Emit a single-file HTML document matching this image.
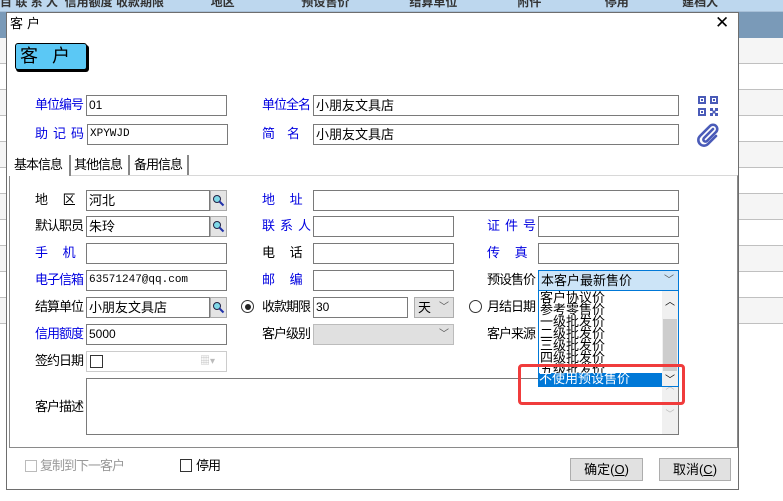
<!DOCTYPE html>
<html><head><meta charset="utf-8"><style>
*{box-sizing:border-box;margin:0;padding:0}
body{width:783px;height:501px;position:relative;background:#fff;font-family:"Liberation Sans","Noto Sans CJK SC",sans-serif;font-size:13px;color:#000;overflow:hidden}
.a{position:absolute}
.hd{background:#bdd7ee;top:0;height:12px;left:0;width:783px;border-bottom:1px solid #a8c0d8}
.lb{position:absolute;font-size:13px;line-height:20px;white-space:nowrap;letter-spacing:-1px}
.bl{color:#0000e0}
.in{position:absolute;border:1px solid #7a7a7a;background:#fff;height:21px;font-size:12px;line-height:19px;padding-left:2px;white-space:nowrap}
.sb{position:absolute;width:17px;height:21px;background:#e4e4e4;border:1px solid #aaa}
.cmb{position:absolute;border:1px solid #adadad;background:#e1e1e1;height:21px;line-height:19px;padding-left:3px}
.chev{position:absolute;right:4px;top:0;font-size:10px;color:#555}
.btn{position:absolute;background:#e1e1e1;border:1px solid #adadad;height:23px;line-height:21px;text-align:center;font-size:13px}
</style></head><body>
<div class="a hd"></div>
<div class="a" style="left:0;top:12px;width:783px;height:26px;background:#7a9ab8"></div>
<div class="a" style="left:0;top:38px;width:783px;height:286px;background:repeating-linear-gradient(#f5f5f5 0 25px,#c0c0c0 25px 26px,#fff 26px 51px,#c0c0c0 51px 52px)"></div>
<div class="a" style="left:0;top:-3px;font-size:12px;color:#333;font-weight:bold;white-space:nowrap;line-height:10px">目 联 系 人&nbsp;&nbsp;信用额度 收款期限&nbsp;&nbsp;&nbsp;&nbsp;&nbsp;&nbsp;&nbsp;&nbsp;&nbsp;&nbsp;&nbsp;&nbsp;&nbsp;&nbsp;地区&nbsp;&nbsp;&nbsp;&nbsp;&nbsp;&nbsp;&nbsp;&nbsp;&nbsp;&nbsp;&nbsp;&nbsp;&nbsp;&nbsp;&nbsp;&nbsp;&nbsp;&nbsp;&nbsp;&nbsp;预设售价&nbsp;&nbsp;&nbsp;&nbsp;&nbsp;&nbsp;&nbsp;&nbsp;&nbsp;&nbsp;&nbsp;&nbsp;&nbsp;&nbsp;&nbsp;&nbsp;&nbsp;&nbsp;结算单位&nbsp;&nbsp;&nbsp;&nbsp;&nbsp;&nbsp;&nbsp;&nbsp;&nbsp;&nbsp;&nbsp;&nbsp;&nbsp;&nbsp;&nbsp;&nbsp;&nbsp;&nbsp;附件&nbsp;&nbsp;&nbsp;&nbsp;&nbsp;&nbsp;&nbsp;&nbsp;&nbsp;&nbsp;&nbsp;&nbsp;&nbsp;&nbsp;&nbsp;&nbsp;&nbsp;&nbsp;&nbsp;停用&nbsp;&nbsp;&nbsp;&nbsp;&nbsp;&nbsp;&nbsp;&nbsp;&nbsp;&nbsp;&nbsp;&nbsp;&nbsp;&nbsp;&nbsp;&nbsp;建档人</div>
<!-- dialog -->
<div class="a" style="left:6px;top:12px;width:733px;height:478px;background:#fff;border:1px solid #6e6e6e"></div>
<div class="lb" style="left:10px;top:14px;letter-spacing:4px">客户</div>
<div class="lb" style="left:715px;top:13px;font-size:17px">✕</div>
<div class="a" style="left:16px;top:45px;width:73px;height:27px;background:#000;border-radius:3px"></div>
<div class="a" style="left:15px;top:43px;width:72px;height:27px;background:#5bc8f5;border:1px solid #000;border-radius:3px;font-size:18px;line-height:25px;padding-left:4px;letter-spacing:14px">客户</div>

<div class="lb bl" style="left:35px;top:95px">单位编号</div>
<div class="in" style="left:86px;top:95px;width:141px">01</div>
<div class="lb bl" style="left:262px;top:95px">单位全名</div>
<div class="in" style="left:313px;top:95px;width:366px;font-size:13px">小朋友文具店</div>
<div class="lb bl" style="left:35px;top:124px;letter-spacing:5px">助记码</div>
<div class="in" style="left:87px;top:124px;width:141px;font-family:'Liberation Mono',monospace;font-size:11px">XPYWJD</div>
<div class="lb bl" style="left:262px;top:124px">简&nbsp;&nbsp;&nbsp;&nbsp;&nbsp;名</div>
<div class="in" style="left:313px;top:124px;width:366px;font-size:13px">小朋友文具店</div>
<svg class="a" style="left:697px;top:95px" width="22" height="22" viewBox="0 0 22 22" fill="#4a5bb8"><path d="M1 1h8v8H1zM3 3v4h4V3zM13 1h8v8h-8zM15 3v4h4V3zM1 13h8v8H1zM3 15v4h4v-4zM4 4h2v2H4zM16 4h2v2h-2zM4 16h2v2H4zM13 13h3v3h-3zM18 13h3v3h-3zM15.5 15.5h3v3h-3zM13 18h3v3h-3zM18 18h3v3h-3z"/></svg>
<svg class="a" style="left:696px;top:123px" width="24" height="24" viewBox="0 0 24 24" fill="none" stroke="#4a5bb8" stroke-width="2.6" stroke-linecap="round"><path d="M17 6 L8 15 a2 2 0 0 0 3 3 L20 9 a4 4 0 0 0 -6 -6 L4 13 a5.5 5.5 0 0 0 8 8 L20 13"/></svg>

<!-- tabs -->
<div class="a" style="left:9px;top:175px;width:729px;height:273px;border:1px solid #8a8a8a;border-top:1px solid #d8d8d8"></div>
<div class="lb" style="left:9px;top:155px;width:62px;height:21px;background:#fff;border-right:2px solid #888;padding-left:5px">基本信息</div>
<div class="lb" style="left:72px;top:155px;width:58px;border-right:2px solid #888;padding-left:2px">其他信息</div>
<div class="lb" style="left:131px;top:155px;width:58px;border-right:2px solid #888;padding-left:3px">备用信息</div>

<div class="lb" style="left:35px;top:190px">地&nbsp;&nbsp;&nbsp;&nbsp;&nbsp;&nbsp;区</div>
<div class="in" style="left:86px;top:190px;width:124px;font-size:13px">河北</div>
<div class="sb" style="left:210px;top:190px"><svg width="15" height="19"><circle cx="6" cy="8" r="3.5" fill="#7fd8e8" stroke="#224"/><path d="M8.5 10.5l4 4" stroke="#2233aa" stroke-width="2"/></svg></div>
<div class="lb bl" style="left:262px;top:190px">地&nbsp;&nbsp;&nbsp;&nbsp;&nbsp;&nbsp;址</div>
<div class="in" style="left:313px;top:190px;width:366px"></div>

<div class="lb" style="left:35px;top:216px">默认职员</div>
<div class="in" style="left:86px;top:216px;width:124px;font-size:13px">朱玲</div>
<div class="sb" style="left:210px;top:216px"><svg width="15" height="19"><circle cx="6" cy="8" r="3.5" fill="#7fd8e8" stroke="#224"/><path d="M8.5 10.5l4 4" stroke="#2233aa" stroke-width="2"/></svg></div>
<div class="lb bl" style="left:262px;top:216px;letter-spacing:5px">联系人</div>
<div class="in" style="left:313px;top:216px;width:141px"></div>
<div class="lb bl" style="left:487px;top:216px;letter-spacing:5px">证件号</div>
<div class="in" style="left:538px;top:216px;width:141px"></div>

<div class="lb bl" style="left:35px;top:243px">手&nbsp;&nbsp;&nbsp;&nbsp;&nbsp;&nbsp;机</div>
<div class="in" style="left:86px;top:243px;width:141px"></div>
<div class="lb" style="left:262px;top:243px">电&nbsp;&nbsp;&nbsp;&nbsp;&nbsp;&nbsp;话</div>
<div class="in" style="left:313px;top:243px;width:141px"></div>
<div class="lb bl" style="left:487px;top:243px">传&nbsp;&nbsp;&nbsp;&nbsp;&nbsp;&nbsp;真</div>
<div class="in" style="left:538px;top:243px;width:141px"></div>

<div class="lb bl" style="left:35px;top:270px">电子信箱</div>
<div class="in" style="left:86px;top:270px;width:141px;font-family:'Liberation Mono',monospace;font-size:11px">63571247@qq.com</div>
<div class="lb bl" style="left:262px;top:270px">邮&nbsp;&nbsp;&nbsp;&nbsp;&nbsp;&nbsp;编</div>
<div class="in" style="left:313px;top:270px;width:141px"></div>
<div class="lb" style="left:487px;top:270px">预设售价</div>
<div class="a" style="left:538px;top:270px;width:141px;height:21px;background:#cce4f7;border:1px solid #0078d7;line-height:19px;padding-left:2px">本客户最新售价<span class="chev">﹀</span></div>

<div class="lb" style="left:35px;top:297px">结算单位</div>
<div class="in" style="left:86px;top:297px;width:124px;font-size:13px">小朋友文具店</div>
<div class="sb" style="left:210px;top:297px"><svg width="15" height="19"><circle cx="6" cy="8" r="3.5" fill="#7fd8e8" stroke="#224"/><path d="M8.5 10.5l4 4" stroke="#2233aa" stroke-width="2"/></svg></div>
<div class="a" style="left:241px;top:300px;width:13px;height:13px;border:1px solid #333;border-radius:50%"><div class="a" style="left:2.5px;top:2.5px;width:6px;height:6px;border-radius:50%;background:#222"></div></div>
<div class="lb" style="left:262px;top:297px">收款期限</div>
<div class="in" style="left:313px;top:297px;width:95px">30</div>
<div class="cmb" style="left:414px;top:297px;width:40px">天<span class="chev">﹀</span></div>
<div class="a" style="left:469px;top:300px;width:13px;height:13px;border:1px solid #333;border-radius:50%"></div>
<div class="lb" style="left:487px;top:297px">月结日期</div>

<div class="lb bl" style="left:35px;top:324px">信用额度</div>
<div class="in" style="left:86px;top:324px;width:141px">5000</div>
<div class="lb" style="left:262px;top:324px">客户级别</div>
<div class="cmb" style="left:313px;top:324px;width:141px;border-color:#bcbcbc;background:#e0e0e0"><span class="chev">﹀</span></div>
<div class="lb" style="left:487px;top:324px">客户来源</div>

<div class="lb" style="left:35px;top:351px">签约日期</div>
<div class="in" style="left:86px;top:351px;width:141px;border-color:#ccc"><div class="a" style="left:3px;top:3px;width:13px;height:13px;border:1px solid #333"></div><span class="a" style="left:113px;top:0;color:#bbb;font-size:10px">▦▾</span></div>

<div class="lb" style="left:35px;top:397px">客户描述</div>
<div class="in" style="left:86px;top:378px;width:593px;height:57px"><div class="a" style="right:0;top:0;width:16px;height:55px;background:#f0f0f0;color:#bbb;font-size:9px;text-align:center;line-height:14px">︿<br><br>﹀</div></div>

<!-- dropdown list -->
<div class="a" style="left:538px;top:290px;width:141px;height:97px;background:#fff;border:1px solid #0078d7;overflow:hidden">
<div style="font-size:13px;line-height:12px;padding-left:1px;padding-top:1px">客户协议价<br>参考零售价<br>一级批发价<br>二级批发价<br>三级批发价<br>四级批发价<br>五级批发价</div>
<div class="a" style="left:0;top:82px;width:123px;height:13px;background:#0078d7;color:#fff;line-height:12px">不使用预设售价</div>
<div class="a" style="right:0;top:0;width:16px;height:95px;background:#f0f0f0"><div class="a" style="left:1px;top:28px;width:14px;height:52px;background:#cdcdcd"></div><div class="a" style="left:3px;top:2px;font-size:10px">︿</div><div class="a" style="left:3px;top:80px;font-size:10px">﹀</div></div>
</div>
<div class="a" style="left:518px;top:364px;width:167px;height:41px;border:3px solid #f03c3c;border-radius:4px"></div>

<!-- bottom -->
<div class="a" style="left:25px;top:460px;width:12px;height:12px;border:1px solid #bbb"></div>
<div class="lb" style="left:40px;top:456px;color:#999">复制到下一客户</div>
<div class="a" style="left:180px;top:459px;width:12px;height:13px;border:1px solid #333"></div>
<div class="lb" style="left:196px;top:456px">停用</div>
<div class="btn" style="left:570px;top:458px;width:73px">确定(<u>O</u>)</div>
<div class="btn" style="left:659px;top:458px;width:72px">取消(<u>C</u>)</div>
</body></html>
